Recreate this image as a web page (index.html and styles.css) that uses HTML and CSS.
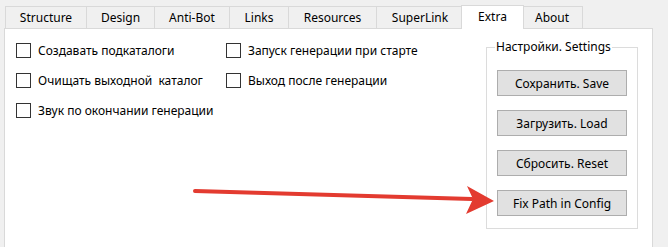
FILE: index.html
```html
<!DOCTYPE html>
<html lang="ru">
<head>
    <meta charset="UTF-8">
    <meta name="viewport" content="width=device-width, initial-scale=1.0">
    <title>Extra</title>
    <link rel="stylesheet" href="styles.css">
</head>
    <body>
        <div class="tabs">
            <div class="tab tab_structure">Structure</div>
            <div class="tab tab_design">Design</div>
            <div class="tab tab_antibot">Anti-Bot</div>
            <div class="tab tab_links">Links</div>
            <div class="tab tab_resources">Resources</div>
            <div class="tab tab_superlink">SuperLink</div>
            <div class="tab tab_extra active">Extra</div>
            <div class="tab tab_about">About</div>
        </div>
        <div class="panel">
            <div class="options">
                <label class="check"><span class="box"></span>Создавать подкаталоги</label>
                <label class="check"><span class="box"></span>Запуск генерации при старте</label>
                <label class="check"><span class="box"></span>Очищать выходной&nbsp; каталог</label>
                <label class="check"><span class="box"></span>Выход после генерации</label>
                <label class="check"><span class="box"></span>Звук по окончании генерации</label>
            </div>
            <fieldset class="settings">
                <legend>Настройки. Settings</legend>
                <button>Сохранить. Save</button>
                <button>Загрузить. Load</button>
                <button>Сбросить. Reset</button>
                <button>Fix Path in Config</button>
            </fieldset>
        </div>
        <!-- annotation arrow drawn over the window -->
        <svg class="arrow" width="668" height="247" viewBox="0 0 668 247">
            <line x1="195" y1="191" x2="472" y2="199" stroke="#e33b30" stroke-width="4" stroke-linecap="round"/>
            <polygon points="467,186 494,201 466,214 473,199" fill="#e33b30"/>
        </svg>
    </body>
</html>
```

FILE: styles.css
```css
* {
    box-sizing: border-box;
}
body {
    margin: 0;
    background-color: #f0f0f0;
    font-family: "Noto Sans", "Liberation Sans", sans-serif;
    font-size: 12px;
    color: #000;
    height: 247px;
    overflow: hidden;
    position: relative;
}

.tabs {
    display: flex;
    align-items: flex-end;
    height: 28px;
    padding-top: 4px;
    padding-left: 5px;
}
.tab {
    height: 22px;
    margin-right: -1px;
    border: solid 1px #d9d9d9;
    border-bottom: none;
    background-color: #f0f0f0;
    display: flex;
    justify-content: center;
    align-items: center;
    padding-bottom: 1px;
}
.tab.active {
    position: relative;
    z-index: 2;
    height: 24px;
    margin-left: -2px;
    margin-right: -3px;
    margin-bottom: -1px;
    background-color: #fff;
    padding-bottom: 2px;
}
.tab_structure { width: 82px; }
.tab_design { width: 69px; }
.tab_antibot { width: 76px; }
.tab_links { width: 60px; }
.tab_resources { width: 89px; }
.tab_superlink { width: 88px; }
.tab_extra { width: 63px; }
.tab_about { width: 62px; }

.panel {
    margin-left: 4px;
    width: 649px;
    height: 219px;
    background-color: #fff;
    border: solid 1px #d9d9d9;
    border-bottom: none;
    display: flex;
    align-items: flex-start;
}

.options {
    display: grid;
    grid-template-columns: 210px auto;
    row-gap: 15px;
    padding-top: 14px;
    padding-left: 11px;
}
.check {
    display: flex;
    align-items: center;
    gap: 7px;
    height: 15px;
    white-space: nowrap;
}
.box {
    width: 15px;
    height: 15px;
    border: solid 1px #333;
    background-color: #fff;
    flex: none;
}

.settings {
    margin: 10px 14px 0 auto;
    width: 152px;
    padding: 0 10px 12px;
    border: solid 1px #dcdcdc;
    display: flex;
    flex-direction: column;
    gap: 14px;
}
.settings legend {
    padding: 0 1px;
    margin-left: -2px;
    line-height: 16px;
}
.settings button {
    width: 130px;
    height: 26px;
    font-family: inherit;
    font-size: 12px;
    color: #000;
    background-color: #e1e1e1;
    border: solid 1px #adadad;
    border-radius: 0;
    padding: 0;
}
.settings button:first-of-type {
    margin-top: 15px;
}

.arrow {
    position: absolute;
    left: 0;
    top: 0;
    pointer-events: none;
}
```
